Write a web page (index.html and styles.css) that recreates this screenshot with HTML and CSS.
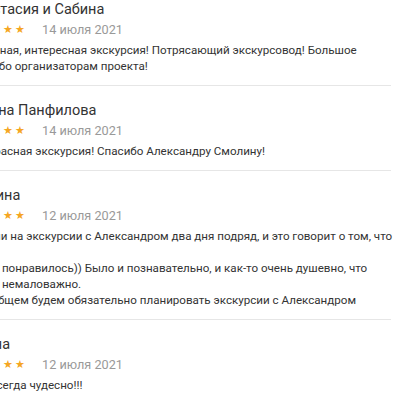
FILE: index.html
```html
<!DOCTYPE html>
<html lang="ru">
<head>
<meta charset="UTF-8">
<meta name="viewport" content="width=device-width, initial-scale=1.0">
<title>Отзывы</title>
<link rel="stylesheet" href="styles.css">
</head>
<body>
<div class="reviews">
  <div class="review">
    <div class="author">Анастасия и Сабина</div>
    <div class="meta">
      <span class="stars">★★★★★</span>
      <span class="date">14 июля 2021</span>
    </div>
    <div class="text">Отличная, интересная экскурсия! Потрясающий экскурсовод! Большое спасибо организаторам проекта!</div>
  </div>
  <div class="review">
    <div class="author">Галина Панфилова</div>
    <div class="meta">
      <span class="stars">★★★★★</span>
      <span class="date">14 июля 2021</span>
    </div>
    <div class="text">Прекрасная экскурсия! Спасибо Александру Смолину!</div>
  </div>
  <div class="review">
    <div class="author">Марина</div>
    <div class="meta">
      <span class="stars">★★★★★</span>
      <span class="date">12 июля 2021</span>
    </div>
    <div class="text lines">Ходили на экскурсии с Александром два дня подряд, и это говорит о том, что<br>нам<br>очень понравилось)) Было и познавательно, и как-то очень душевно, что<br>очень немаловажно.<br>И вообщем будем обязательно планировать экскурсии с Александром</div>
  </div>
  <div class="review">
    <div class="author">Ирина</div>
    <div class="meta">
      <span class="stars">★★★★★</span>
      <span class="date">12 июля 2021</span>
    </div>
    <div class="text">Как всегда чудесно!!!</div>
  </div>
</div>
</body>
</html>
```

FILE: styles.css
```css
html, body {
  overflow: hidden;
}
body {
  margin: 0;
  font-family: Roboto, "Noto Sans", sans-serif;
  color: #333;
  background: #fff;
}
.reviews {
  margin: -15px 0 0 -33px;
  width: 424px;
}
.review {
  padding: 15px 0 11px;
  border-bottom: 1px solid #e6e6e6;
}
.author {
  font-size: 14.5px;
  line-height: 20px;
  color: #333;
}
.meta {
  display: flex;
  align-items: center;
  gap: 15px;
  height: 18px;
}
.stars {
  color: #f5a623;
  font-size: 11px;
  letter-spacing: 2px;
}
.date {
  font-size: 12.7px;
  color: #999;
}
.text {
  margin-top: 4px;
  font-size: 11.6px;
  line-height: 16px;
  color: #333;
}
/* author's own line breaks, keep them as typed */
.text.lines {
  white-space: nowrap;
}
```
